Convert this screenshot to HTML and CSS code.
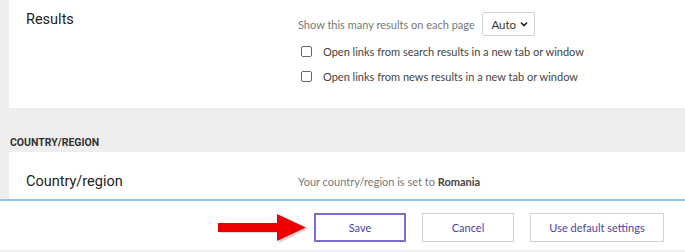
FILE: index.html
```html
<!DOCTYPE html>
<html lang="en">
<head>
  <meta charset="UTF-8">
  <title>Settings</title>
  <link rel="stylesheet" href="styles.css">
</head>
<body>

  <main class="settings">
    <!-- Résultats -->
    <section class="card card-results">
      <div class="row">
        <h3 class="row-title">Results</h3>
        <div class="row-body">
          <div class="per-page">
            <span>Show this many results on each page</span>
            <span class="select">Auto
              <svg width="8" height="6" viewBox="0 0 8 6"><path d="M1 1.5l3 3 3-3" fill="none" stroke="#222" stroke-width="1.6"/></svg>
            </span>
          </div>
          <label class="check"><span class="box"></span>Open links from search results in a new tab or window</label>
          <label class="check"><span class="box"></span>Open links from news results in a new tab or window</label>
        </div>
      </div>
    </section>

    <h4 class="section-head">COUNTRY/REGION</h4>

    <section class="card card-country">
      <div class="row">
        <h3 class="row-title">Country/region</h3>
        <div class="row-body">
          <p class="info">Your country/region is set to <b>Romania</b></p>
        </div>
      </div>
    </section>
  </main>

  <footer class="actions">
    <svg class="arrow" width="92" height="30" viewBox="0 0 92 30">
      <path d="M3 11 H62 V1 L91 15 L62 29 V19 H3 Z" fill="#8a8a8a" opacity="0.35" transform="translate(1,1)"/>
      <path d="M2 10 H61 V1 L90 14.5 L61 28 V19 H2 Z" fill="#ee0000"/>
    </svg>
    <button class="btn btn-primary">Save</button>
    <button class="btn">Cancel</button>
    <button class="btn btn-wide">Use default settings</button>
  </footer>

</body>
</html>
```

FILE: styles.css
```css
body {
  margin: 0;
  background-color: #eeeeee;
  font-family: Roboto, "Liberation Sans", sans-serif;
  color: #222;
}

.settings {
  padding-left: 9px;
}

.card {
  background: #fff;
  padding-left: 17px;
}

.card-results {
  padding-top: 10px;
  height: 98px;
}

.card-country {
  padding-top: 20px;
  height: 27px;
  overflow: hidden;
}

.row {
  display: flex;
}

.row-title {
  margin: 0;
  width: 272px;
  font-size: 14.5px;
  font-weight: normal;
  line-height: 20px;
}

.row-body {
  font-family: Lato, "Open Sans", sans-serif;
  font-size: 11px;
}

.per-page {
  display: flex;
  align-items: center;
  gap: 7px;
  margin-top: 2px;
  height: 24px;
  color: #777;
}

.select {
  display: flex;
  align-items: center;
  gap: 4px;
  height: 22px;
  width: 48px;
  padding: 0 0 0 3px;
  box-sizing: content-box;
  justify-content: center;
  border: 1px solid #cfcfcf;
  border-radius: 2px;
  color: #333;
  font-size: 11.5px;
}

.check {
  display: flex;
  align-items: center;
  height: 25px;
  margin-left: 3px;
  color: #444;
}

.check:first-of-type {
  margin-top: 3px;
}

.box {
  width: 9px;
  height: 9px;
  border: 1px solid #666;
  border-radius: 2px;
  margin-right: 11px;
}

.info {
  margin: 0;
  line-height: 20px;
  color: #777;
}

.info b {
  color: #444;
}

.section-head {
  margin: 0;
  height: 44px;
  display: flex;
  align-items: flex-end;
  box-sizing: border-box;
  font-size: 10.5px;
  line-height: 14px;
  padding-bottom: 2px;
  padding-left: 1px;
  color: #333;
}

.actions {
  border-top: 2px solid #94c4f4;
  background: #fff;
  height: 51px;
  box-sizing: border-box;
  display: flex;
  justify-content: flex-end;
  align-items: flex-start;
  gap: 16px;
  padding: 12px 21px 0 0;
}

.arrow {
  margin-right: -10px;
}

.btn {
  width: 92px;
  height: 29px;
  padding: 0;
  background: #fff;
  border: 1px solid #d2d2d2;
  color: #4d3fae;
  font-family: Lato, "Open Sans", sans-serif;
  font-size: 11px;
  white-space: nowrap;
  cursor: pointer;
}

.btn-primary {
  border: 2px solid #7b6fd0;
}

.btn-wide {
  width: 134px;
}
```
